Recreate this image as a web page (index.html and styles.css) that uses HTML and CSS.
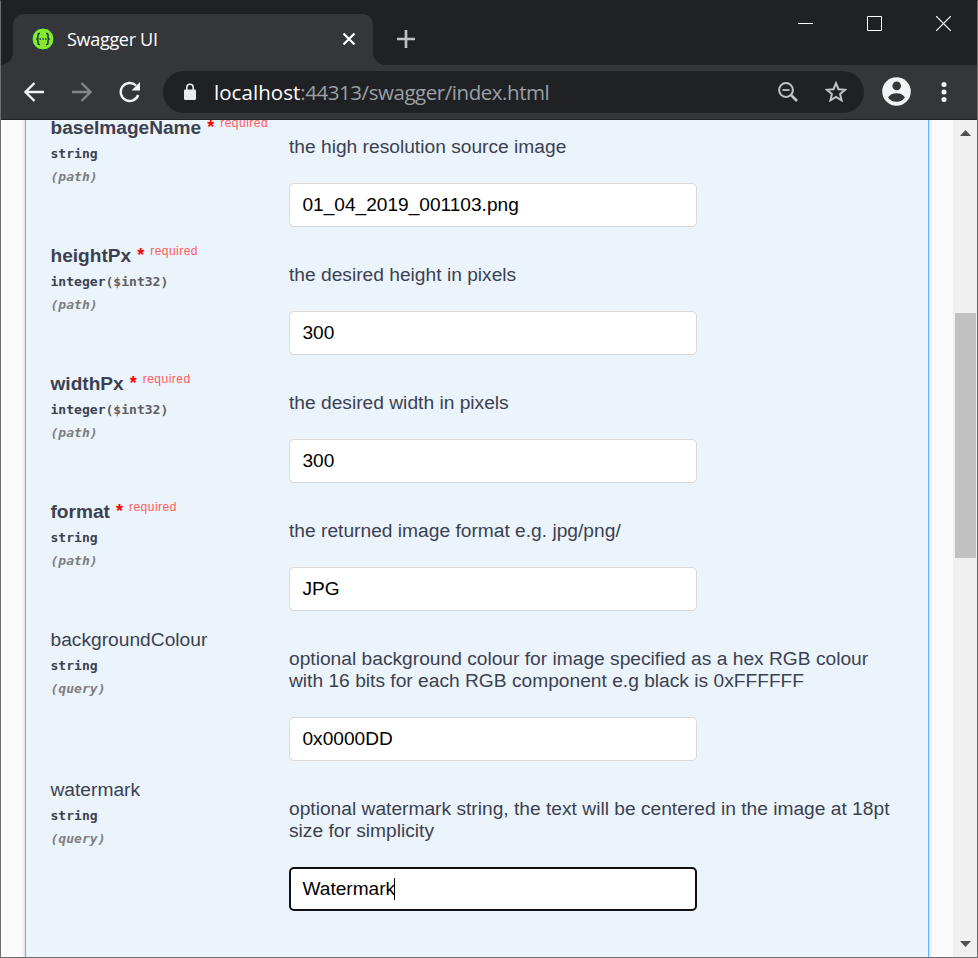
FILE: index.html
```html
<!DOCTYPE html>
<html lang="en">
<head>
<meta charset="utf-8">
<title>Swagger UI</title>
<link rel="stylesheet" href="styles.css">
</head>
<body>
<div class="window">
  <header class="tabs">
    <div class="tab">
      <svg class="favicon" width="24" height="24" viewBox="0 0 24 24"><circle cx="12" cy="12" r="11" fill="#85ea2d" stroke="#173647" stroke-width="1"/><g fill="none" stroke="#173647" stroke-width="1.500"><path d="M9 6.500H8.200Q7 6.500 7 8v2.200Q7 12 5.300 12 7 12 7 13.800V16q0 1.500 1.200 1.500H9M15 6.500h.8Q17 6.500 17 8v2.200Q17 12 18.700 12 17 12 17 13.800V16q0 1.500-1.200 1.500H15"/></g><path d="M8.500 11.300H10v1.500H8.500zM11.300 11.300h1.500v1.500h-1.500zM14 11.300h1.500v1.500H14z" fill="#173647"/></svg>
      <span class="tab-title">Swagger UI</span>
      <svg class="tab-close" width="14" height="14" viewBox="0 0 14 14"><path d="M1.500 1.500l11 11m0-11l-11 11" stroke="#fff" stroke-width="2.200"/></svg>
    </div>
    <svg class="new-tab" width="18" height="18" viewBox="0 0 18 18"><path d="M9 0v18M0 9h18" stroke="#bdc1c6" stroke-width="2.700"/></svg>
    <div class="controls">
      <svg width="15" height="15" viewBox="0 0 15 15"><path d="M0 7.500h15" stroke="#fff"/></svg>
      <svg width="15" height="15" viewBox="0 0 15 15"><path d="M.5.5h14v14H.5z" fill="none" stroke="#fff"/></svg>
      <svg width="15" height="15" viewBox="0 0 15 15"><path d="M0 0l15 15m0-15L0 15" stroke="#fff" stroke-width="1.200"/></svg>
    </div>
  </header>
  <nav class="toolbar">
    <svg class="back" width="20" height="20" viewBox="0 0 20 20"><path d="M20 10H1.500M10.500 1l-9 9 9 9" fill="none" stroke="#f1f3f4" stroke-width="2.300"/></svg>
    <svg class="forward" width="20" height="20" viewBox="0 0 20 20"><path d="M0 10h18.500M9.500 1l9 9-9 9" fill="none" stroke="#85868a" stroke-width="2.300"/></svg>
    <svg class="reload" width="22" height="22" viewBox="0 0 22 22"><path d="M19.200 14A9 9 0 1 1 17 4.500" fill="none" stroke="#f1f3f4" stroke-width="2.400"/><path d="M21 1v8.500h-8.500z" fill="#f1f3f4"/></svg>
    <div class="address">
      <svg class="lock" width="14" height="18" viewBox="0 0 14 18"><rect x="1" y="6.500" width="12" height="10.500" rx="1.200" fill="#e8eaed"/><path d="M3.800 8V4.500a3.200 3.200 0 0 1 6.400 0V8" fill="none" stroke="#e8eaed" stroke-width="1.600"/></svg>
      <span class="url"><b>localhost</b><span>:44313/swagger/index.html</span></span>
      <svg class="zoom" width="20" height="20" viewBox="0 0 20 20"><circle cx="8" cy="8" r="6.900" fill="none" stroke="#c2c3c5" stroke-width="2"/><path d="M4.500 8h7" stroke="#c2c3c5" stroke-width="1.800"/><path d="M13 13l6 6" stroke="#c2c3c5" stroke-width="2.600"/></svg>
      <svg class="star" width="22" height="21" viewBox="0 0 22 21"><path d="M11 2.200l2.500 6 6.500.6-4.900 4.300 1.500 6.300L11 16l-5.600 3.400 1.500-6.300L2 8.800l6.500-.6z" fill="none" stroke="#c2c3c5" stroke-width="2"/></svg>
    </div>
    <svg class="profile" width="29" height="29" viewBox="0 0 29 29"><circle cx="14.500" cy="14.500" r="14.300" fill="#f1f3f4"/><circle cx="14.700" cy="8.900" r="4.300" fill="#35363a"/><path d="M6 20.500q2.500-4.300 8.500-4.300t8.500 4.300q-3 4.200-8.500 4.200T6 20.500" fill="#35363a"/></svg>
    <svg class="more" width="6" height="20" viewBox="0 0 6 20"><g fill="#f1f3f4"><circle cx="3" cy="2.600" r="2.500"/><circle cx="3" cy="10" r="2.500"/><circle cx="3" cy="17.400" r="2.500"/></g></svg>
  </nav>
  <div class="viewport">
    <main class="page">
      <section class="panel">
        <div class="row"><div class="param"><div class="name req">baseImageName<i>*</i><sup>required</sup></div><div class="type">string</div><div class="in">(path)</div></div><div class="detail"><p>the high resolution source image</p><div class="input">01_04_2019_001103.png</div></div></div>
        <div class="row"><div class="param"><div class="name req">heightPx<i>*</i><sup>required</sup></div><div class="type">integer<span>($int32)</span></div><div class="in">(path)</div></div><div class="detail"><p>the desired height in pixels</p><div class="input">300</div></div></div>
        <div class="row"><div class="param"><div class="name req">widthPx<i>*</i><sup>required</sup></div><div class="type">integer<span>($int32)</span></div><div class="in">(path)</div></div><div class="detail"><p>the desired width in pixels</p><div class="input">300</div></div></div>
        <div class="row"><div class="param"><div class="name req">format<i>*</i><sup>required</sup></div><div class="type">string</div><div class="in">(path)</div></div><div class="detail"><p>the returned image format e.g. jpg/png/</p><div class="input">JPG</div></div></div>
        <div class="row"><div class="param"><div class="name">backgroundColour</div><div class="type">string</div><div class="in">(query)</div></div><div class="detail"><p>optional background colour for image specified as a hex RGB colour<br>with 16 bits for each RGB component e.g black is 0xFFFFFF</p><div class="input">0x0000DD</div></div></div>
        <div class="row"><div class="param"><div class="name">watermark</div><div class="type">string</div><div class="in">(query)</div></div><div class="detail"><p>optional watermark string, the text will be centered in the image at 18pt<br>size for simplicity</p><div class="input focused">Watermark<span class="caret"></span></div></div></div>
      </section>
    </main>
    <div class="scrollbar">
      <svg width="11" height="6" viewBox="0 0 11 6"><path d="M0 6L5.500 0 11 6z" fill="#505050"/></svg>
      <div class="thumb"></div>
      <svg class="down" width="11" height="6" viewBox="0 0 11 6"><path d="M0 0l5.500 6L11 0z" fill="#505050"/></svg>
    </div>
  </div>
</div>
</body>
</html>
```
FILE: styles.css
```css
* { box-sizing: border-box; }
body { margin: 0; overflow: hidden; font: 19.2px/22px "Liberation Sans", Arial, sans-serif; color: #3b4151; }
svg { display: block; flex: none; }
.window { width: 978px; height: 958px; border: 1px solid #6e6e6e; border-top-color: #202124; display: flex; flex-direction: column; background: #202124; }
.tabs { height: 64px; flex: none; display: flex; padding-left: 12px; }
.tab { position: relative; width: 360px; height: 51px; margin-top: 13px; padding: 0 0 2px 18px; display: flex; align-items: center; background: #35363a; border-radius: 11px 11px 0 0; color: #fff; font: 18px/24px "Open Sans", sans-serif; }
.tab::before, .tab::after { content: ""; position: absolute; bottom: 0; width: 12px; height: 12px; }
.tab::before { left: -12px; background: radial-gradient(circle at 0 0, transparent 11.5px, #35363a 12px); }
.tab::after { right: -12px; background: radial-gradient(circle at 100% 0, transparent 11.5px, #35363a 12px); }
.tab-title { margin-left: 12px; white-space: nowrap; letter-spacing: -.3px; }
.tab-close { margin: 0 17px 0 auto; }
.new-tab { margin: 29px 0 0 24px; }
.controls { display: flex; gap: 54px; margin: 15px 26px 0 auto; }
.toolbar { height: 55px; flex: none; display: flex; align-items: center; padding: 0 0 1px 23px; background: #35363a; border-bottom: 1px solid #202124; }
.forward { margin-left: 28px; }
.reload { margin-left: 27px; }
.address { width: 701px; height: 42px; margin-left: 22px; border-radius: 21px; background: #202124; display: flex; align-items: center; padding: 0 17px 0 20px; }
.url { margin-left: 17px; font: 20.5px/30px "Open Sans", sans-serif; color: #9aa0a6; white-space: nowrap; letter-spacing: -.45px; }
.url b { font-weight: 400; color: #fff; letter-spacing: .05px; }
.zoom { margin-left: auto; }
.star { margin-left: 27px; }
.profile { margin-left: 18px; }
.more { margin-left: 30px; }
.viewport { flex: 1; min-height: 0; display: flex; overflow: hidden; background: #fafafa; }
.page { width: 952px; padding: 0 24px; overflow: hidden; }
.panel { height: 900px; margin-top: -20px; padding: 11px 0 0 24px; background: #ebf3fb; border: 1px solid #61affe; box-shadow: 0 0 4px rgba(0,0,0,.19); }
.row { display: grid; grid-template-columns: 239px 1fr; padding-bottom: 13px; }
.param { padding: 5px 0 0 .5px; }
.name { display: flex; height: 25px; white-space: nowrap; }
.req { font-weight: 700; font-size: 19.1px; }
.name i { margin: -1px 0 0 6px; font-style: normal; color: red; font-size: 18px; }
.name sup { margin: -5px 0 0 6px; font-size: 12px; font-weight: 400; line-height: 22px; color: #ff5d5d; letter-spacing: .48px; }
.type, .in { font: 700 13.05px/23px "DejaVu Sans Mono", monospace; }
.type span { color: #606060; }
.in { color: gray; font-style: italic; }
.detail { padding-top: 24px; }
.detail p { margin: 0 0 25px; white-space: nowrap; }
.input { width: 408px; height: 44px; padding: 10px 12.5px; border: 1px solid #d9d9d9; border-radius: 5px; background: #fff; color: #000; display: flex; font-size: 19.1px; }
.focused { border: 2px solid #101010; padding: 9px 11.5px; }
.caret { width: 1px; height: 22px; margin-left: -1px; background: #000; }
.scrollbar { width: 24px; background: #f0f0f0; display: flex; flex-direction: column; align-items: center; padding: 10px 0; }
.thumb { width: 21px; height: 245px; margin-top: 177px; background: #c1c1c1; }
.down { margin-top: auto; }
```
